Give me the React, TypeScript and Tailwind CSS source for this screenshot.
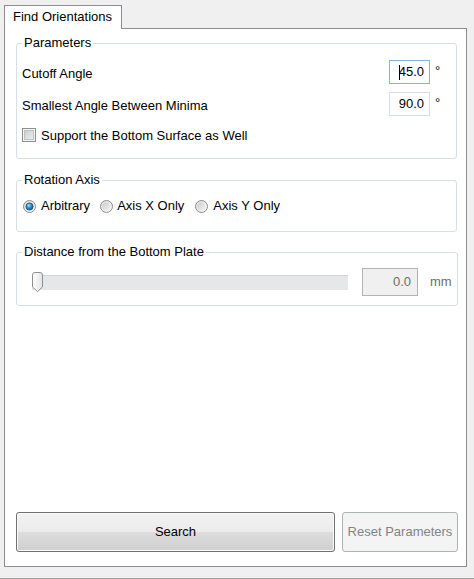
import React from "react";

function Radio({ checked }: { checked?: boolean }) {
  return (
    <svg width="13" height="13" viewBox="0 0 13 13" className="shrink-0">
      <defs>
        <linearGradient id="ro" x1="0" y1="0" x2="1" y2="1">
          <stop offset="0" stopColor="#dcdcdc" />
          <stop offset="1" stopColor="#fbfbfb" />
        </linearGradient>
        <linearGradient id="ri" x1="0" y1="0" x2="1" y2="1">
          <stop offset="0" stopColor="#cbcbcb" />
          <stop offset="1" stopColor="#f4f4f4" />
        </linearGradient>
        <radialGradient id="rb" cx="0.4" cy="0.35" r="0.7">
          <stop offset="0" stopColor="#a6e4fb" />
          <stop offset="0.45" stopColor="#2e9ad6" />
          <stop offset="1" stopColor="#0e4c7c" />
        </radialGradient>
      </defs>
      <circle cx="6.5" cy="6.5" r="6" fill="url(#ro)" stroke="#8b8c8d" strokeWidth="1" />
      {checked ? (
        <circle cx="6.5" cy="6.5" r="3.6" fill="url(#rb)" stroke="#1a4e75" strokeWidth="0.8" />
      ) : (
        <circle cx="6.5" cy="6.5" r="4" fill="url(#ri)" />
      )}
    </svg>
  );
}

function Thumb() {
  return (
    <svg width="11" height="20" viewBox="0 0 11 20">
      <defs>
        <linearGradient id="tg" x1="0" y1="0" x2="1" y2="0">
          <stop offset="0" stopColor="#ffffff" />
          <stop offset="1" stopColor="#e4e4e4" />
        </linearGradient>
      </defs>
      <path
        d="M0.5 3 Q0.5 0.5 3 0.5 H8 Q10.5 0.5 10.5 3 V15 L5.5 19.5 L0.5 15 Z"
        fill="url(#tg)"
        stroke="#8e8f8f"
        strokeWidth="1"
      />
    </svg>
  );
}

export default function App() {
  return (
    <div className="w-[474px] h-[579px] bg-[#f0f0f0] border-b border-[#a0a0a0] font-['Liberation_Sans',Arial,sans-serif] text-[13px] text-black flex flex-col">
      <div className="pt-[5px] pl-[4px] flex">
        <div className="relative z-10 -mb-px h-[24px] w-[118px] border border-b-0 border-[#898c95] bg-white pl-[8px] leading-[22px]">
          Find Orientations
        </div>
      </div>
      <div className="ml-[4px] w-[463px] h-[539px] border border-[#898c95] bg-white flex flex-col pl-[11px] pt-[6px] pb-[14px]">
        {/* Parameters */}
        <fieldset className="w-[441px] h-[124px] border border-[#d5dfe5] rounded-[3px] px-[5px]">
          <legend className="px-[2px] leading-[16px]">Parameters</legend>
          <div className="mt-[9px] h-[24px] flex items-center">
            <span className="flex-1 pt-[3px]">Cutoff Angle</span>
            <div className="w-[41px] h-[24px] border border-[#7eb4ea] flex items-center justify-end pr-[5px]">
              <span className="w-px h-[15px] bg-black mr-[-1px]" />
              <span>45.0</span>
            </div>
            <span className="w-[21px] pl-[5px] -mt-[2px]">°</span>
          </div>
          <div className="mt-[8px] h-[24px] flex items-center">
            <span className="flex-1 pt-[3px]">Smallest Angle Between Minima</span>
            <div className="w-[41px] h-[24px] border border-[#d7dde4] flex items-center justify-end pr-[5px]">
              <span>90.0</span>
            </div>
            <span className="w-[21px] pl-[5px] -mt-[2px]">°</span>
          </div>
          <div className="mt-[11px] h-[16px] flex items-center gap-[5px]">
            <div className="w-[14px] h-[14px] border border-[#8e8f8f] bg-[#f4f4f4] p-[1px] shrink-0">
              <div className="w-full h-full bg-gradient-to-br from-[#d0d0d0] to-[#ececec] border border-[#bfc2c5]" />
            </div>
            <span className="pt-[2px]">Support the Bottom Surface as Well</span>
          </div>
        </fieldset>

        {/* Rotation Axis */}
        <fieldset className="mt-[13px] w-[441px] h-[60px] border border-[#d5dfe5] rounded-[3px] px-[5px]">
          <legend className="px-[2px] leading-[16px]">Rotation Axis</legend>
          <div className="mt-[10px] h-[16px] flex items-center pl-[1px]">
            <div className="flex items-center gap-[5px]">
              <Radio checked />
              <span>Arbitrary</span>
            </div>
            <div className="flex items-center gap-[4px] ml-[10px]">
              <Radio />
              <span>Axis X Only</span>
            </div>
            <div className="flex items-center gap-[5px] ml-[11px]">
              <Radio />
              <span>Axis Y Only</span>
            </div>
          </div>
        </fieldset>

        {/* Distance */}
        <fieldset className="mt-[12px] w-[441px] h-[62px] border border-[#d5dfe5] rounded-[3px] px-[5px]">
          <legend className="px-[2px] leading-[16px]">Distance from the Bottom Plate</legend>
          <div className="mt-[8px] h-[28px] flex items-center">
            <div className="relative ml-[10px] w-[316px] h-[15px] bg-[#e6e7e8] border-t border-[#d3d4d5]">
              <div className="absolute left-0 top-[-4px]">
                <Thumb />
              </div>
            </div>
            <div className="ml-[14px] w-[56px] h-[28px] border border-[#b4b4b4] bg-[#f0f0f0] flex items-center justify-end pr-[6px] text-[#6d6d6d]">
              0.0
            </div>
            <span className="ml-[12px] text-[#6d6d6d]">mm</span>
          </div>
        </fieldset>

        <div className="flex-1" />

        <div className="h-[40px] flex gap-[7px]">
          <button className="w-[319px] h-[40px] rounded-[3px] border border-[#707070] bg-[linear-gradient(to_bottom,#f2f2f2_0%,#ebebeb_50%,#dddddd_50%,#cfcfcf_100%)] shadow-[inset_0_0_0_1px_#fbfbfb] text-black">
            Search
          </button>
          <button className="w-[116px] h-[40px] rounded-[3px] border border-[#adb2b5] bg-[#f4f4f4] text-[#838383]">
            Reset Parameters
          </button>
        </div>
      </div>
    </div>
  );
}
